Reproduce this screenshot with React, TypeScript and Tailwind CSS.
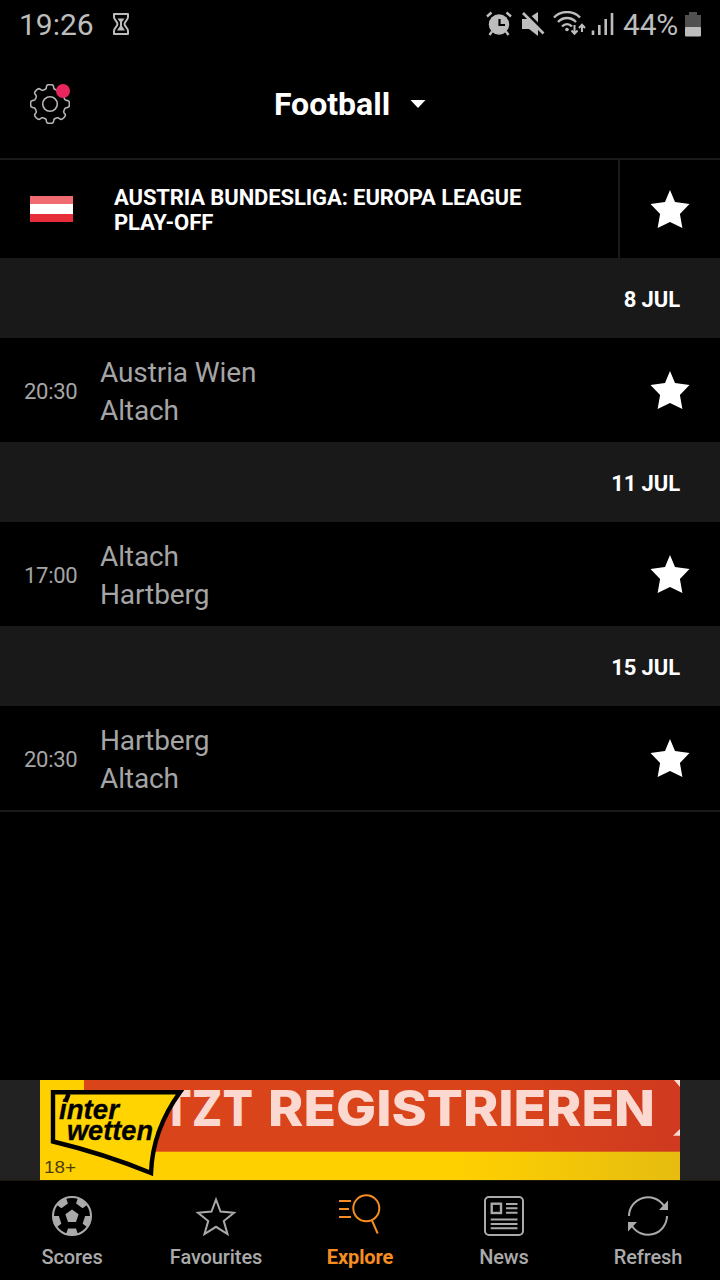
import type { ReactNode } from "react";

const matchDays = [
  { date: "8 JUL", time: "20:30", home: "Austria Wien", away: "Altach" },
  { date: "11 JUL", time: "17:00", home: "Altach", away: "Hartberg" },
  { date: "15 JUL", time: "20:30", home: "Hartberg", away: "Altach" },
];

// outline of an eight tooth gear centred on 20,20
const gearPath = () => {
  const points: string[] = [];
  for (let i = 0; i < 240; i++) {
    const a = (i / 240) * Math.PI * 2;
    const r = 17.4 + 2 * Math.tanh(2.6 * (Math.cos(8 * a) + 0.1));
    points.push(
      `${(20 + r * Math.cos(a)).toFixed(2)} ${(20 + r * Math.sin(a)).toFixed(2)}`
    );
  }
  return `M${points.join("L")}Z`;
};

const StarIcon = () => (
  <svg width="40" height="38" viewBox="0 0 40 38" fill="#fff">
    <path d="M20 0L25 11.900L39.500 14L29.900 24L32.400 38L20 31.900L7.600 38L10.100 24L.5 14L15 11.900Z" />
  </svg>
);

const StatusBar = () => (
  <div className="flex h-12 items-center pl-[19px] text-[30px] text-[#bdbdbd]">
    <span className="w-[76px]">19:26</span>
    <svg className="ml-[17px]" width="18" height="24" viewBox="0 0 18 24" fill="none" stroke="currentColor" strokeWidth="2">
      <path d="M2 2H16V5C16 8 12.500 9.500 12.500 12S16 16 16 19V22H2V19C2 16 5.500 14.500 5.500 12S2 8 2 5Z" strokeLinejoin="round" />
      <path d="M5.500 6.500H12.500L10 10V14L13 18.500H5L8 14V10Z" fill="currentColor" stroke="none" />
    </svg>
    <div className="ml-auto flex items-center pr-[19px]">
      <svg width="26" height="26" viewBox="0 0 26 26" fill="none" stroke="currentColor">
        <circle cx="13" cy="13.500" r="10.200" fill="currentColor" stroke="none" />
        <path d="M13.500 8V14H19" stroke="#000" strokeWidth="2.200" />
        <path d="M1 5.500L5.500 1.500M20.500 1.500L25 5.500M6 20.500L3.500 24M20 20.500L22.500 24" strokeWidth="2.400" />
      </svg>
      <svg className="ml-[10px]" width="23" height="26" viewBox="0 0 23 26">
        <path d="M0 8H5L16 1V25L7 18H0Z" fill="currentColor" />
        <path d="M2.500 0L23 20.500" stroke="#000" strokeWidth="3" />
        <path d="M1 2L21.500 22.500" stroke="currentColor" strokeWidth="2.600" />
      </svg>
      <svg className="ml-2" width="33" height="26" viewBox="0 0 33 26" fill="none" stroke="currentColor" strokeWidth="2.400">
        <path d="M1 6.500C8 -.8 20 -.8 27 6.500M5 11C10 5.600 18 5.600 23 11M9 15.500C12 12.300 16 12.300 19 15.500" />
        <circle cx="14" cy="18.500" r="1.800" fill="currentColor" stroke="none" />
        <path d="M21.500 14V22.500M18.500 19.500L21.500 22.800L24.500 19.500M29 21V15M26 17L29 13.800L32 17" strokeWidth="2" />
      </svg>
      <svg className="ml-[5px]" width="23" height="24" viewBox="0 0 23 24" stroke="currentColor" strokeWidth="2.600">
        <path d="M2 18.500V23M8.300 13V23M14.700 7V23M21 1V23" />
      </svg>
      <span className="ml-[9px] w-[59px] tracking-[-0.2px]">44%</span>
      <svg className="ml-[3px]" width="16" height="25" viewBox="0 0 16 25">
        <path d="M0 3H4V0H12V3H16V15H0Z" fill="#505050" />
        <rect y="15" width="16" height="9.500" rx="1" fill="currentColor" />
      </svg>
    </div>
  </div>
);

const Header = () => (
  <header className="grid h-28 grid-cols-[120px_1fr_140px] items-center border-b-2 border-[#1a1a1a]">
    <div className="relative ml-[30px] mt-0.5 h-10 w-10">
      <svg width="40" height="40" viewBox="0 0 40 40" fill="none" stroke="#b5b5b5" strokeWidth="1.600">
        <path d={gearPath()} />
        <circle cx="20" cy="20" r="7.300" />
      </svg>
      <span className="absolute left-[26px] top-0 h-3.5 w-3.5 rounded-full bg-[#e8255c]" />
    </div>
    <div className="flex items-center justify-center pt-0.5 text-[32px] font-bold text-white">
      Football
      <svg className="ml-5" width="16" height="9" viewBox="0 0 16 9" fill="#fff">
        <path d="M.5 0H15.500L8 8Z" />
      </svg>
    </div>
  </header>
);

const LeagueRow = () => (
  <div className="flex h-[98px] text-white">
    <div className="flex flex-1 items-center pl-[30px]">
      <div className="h-[26px] w-[43px]">
        <div className="h-2 bg-[#f06c70]" />
        <div className="h-[10px] bg-white" />
        <div className="h-2 bg-[#e82d3a]" />
      </div>
      <h2 className="ml-[41px] w-[440px] pt-0.5 text-[22px] font-bold leading-[25px] tracking-[-0.11px]">
        AUSTRIA BUNDESLIGA: EUROPA LEAGUE PLAY-OFF
      </h2>
    </div>
    <div className="flex w-[102px] items-center border-l-2 border-[#1a1a1a] pl-[30px]">
      <StarIcon />
    </div>
  </div>
);

const Banner = () => (
  <div className="flex h-[100px] justify-center bg-[#222]">
    <svg width="640" height="100" viewBox="0 0 640 100">
      <defs>
        <linearGradient id="yellow">
          <stop offset=".65" stopColor="#ffd000" />
          <stop offset="1" stopColor="#e6bc10" />
        </linearGradient>
        <linearGradient id="red">
          <stop offset=".7" stopColor="#da441b" />
          <stop offset="1" stopColor="#cf3a20" />
        </linearGradient>
      </defs>
      <rect width="640" height="100" fill="url(#yellow)" />
      <rect x="44" width="596" height="71.700" fill="url(#red)" />
      <g fill="#fbd9d0" fontFamily="Inter, sans-serif" fontWeight="800" fontSize="49">
        <text x="67" y="45.700" textLength="146" lengthAdjust="spacingAndGlyphs">JETZT</text>
        <text x="228" y="45.700" textLength="387" lengthAdjust="spacingAndGlyphs">REGISTRIEREN</text>
        <path d="M634 0H640V7ZM633 55.700L640 49V55.700Z" />
      </g>
      <path d="M13 12.300H140Q112.500 50 111 93Q65 74 13 61.500Z" fill="#ffd400" stroke="#000" strokeWidth="4.400" />
      <path d="M28.500 14L25.500 22" stroke="#000" strokeWidth="4.500" />
      <g fontFamily="Liberation Sans, sans-serif" fontWeight="700" fontStyle="italic" fontSize="27.500" stroke="#000" strokeWidth=".3">
        <text x="19" y="39.300" textLength="60" lengthAdjust="spacingAndGlyphs">inter</text>
        <text x="27" y="59.500" textLength="86" lengthAdjust="spacingAndGlyphs">wetten</text>
      </g>
      <text x="4" y="92.700" textLength="32" lengthAdjust="spacingAndGlyphs" fontFamily="Liberation Sans, sans-serif" fontSize="16.500" fill="#4a3c0c">18+</text>
    </svg>
  </div>
);

const NavItem = ({ label, active, children }: { label: string; active?: boolean; children: ReactNode }) => (
  <div className={`flex flex-col items-center ${active ? "font-bold text-[#f68d22]" : "font-medium text-[#aaa]"}`}>
    <svg className="overflow-visible" width="40" height="40" viewBox="0 0 40 40" fill="none" stroke="currentColor" strokeWidth="2">
      {children}
    </svg>
    <span className="mt-[9px] text-[20px] leading-6 tracking-[-0.1px]">{label}</span>
  </div>
);

const BottomNav = () => (
  <nav className="grid h-[100px] grid-cols-5 border-t border-[#1c1707] pt-[15px]">
    <NavItem label="Scores">
      <circle cx="20" cy="20" r="19" />
      <g fill="currentColor" stroke="none">
        <path d="M20 13.500L26.600 18.300L24 26H16L13.400 18.300Z" />
        {[0, 72, 144, 216, 288].map((angle) => (
          <path key={angle} d="M16 32.500H24L26 38.500H14Z" transform={`rotate(${angle} 20 20)`} />
        ))}
      </g>
    </NavItem>
    <NavItem label="Favourites">
      <path d="M20 3.500L24.500 15.600L38 16.700L27.800 25L31.500 38L20 30.800L8.500 38L12.200 25L2 16.700L15.500 15.600Z" />
    </NavItem>
    <NavItem label="Explore" active>
      <circle cx="26.300" cy="12.300" r="13" />
      <path d="M32 24.500L37.700 37.500M-1 5H11M-1 13H9M-1 21H11" />
    </NavItem>
    <NavItem label="News">
      <rect x="1" y="1" width="38" height="38" rx="4" />
      <rect x="7.700" y="7.700" width="9.300" height="9.300" strokeWidth="2.400" />
      <path d="M22 8H33.500M22 12.200H33.500M22 16.700H33.500M6.700 23.500H33.500M6.700 28H33.500M6.700 32.300H33.500" />
    </NavItem>
    <NavItem label="Refresh">
      <path d="M1 20A19 19 0 0 1 36 10M39 20A19 19 0 0 1 4 30" />
      <path d="M40 4.500V14H31ZM0 26H9L0 35.500Z" fill="currentColor" stroke="none" />
    </NavItem>
  </nav>
);

export default function App() {
  return (
    <div className="flex h-[1280px] w-[720px] flex-col overflow-hidden bg-black font-['Roboto',sans-serif]">
      <StatusBar />
      <Header />
      <main className="flex-1">
        <LeagueRow />
        {matchDays.map((match) => (
          <section key={match.date}>
            <div className="flex h-20 items-center justify-end bg-[#191919] pr-10 pt-[3px] text-[22px] font-bold tracking-[-0.1px] text-white">
              {match.date}
            </div>
            <div className="flex h-[104px] items-center pr-[30px] text-[#a5a5a5]">
              <span className="w-[100px] pl-6 pt-[3px] text-[22px] tracking-[-0.3px]">{match.time}</span>
              <div className="flex-1 pt-1 text-[28px] leading-[38px] tracking-[-0.1px]">
                <p>{match.home}</p>
                <p>{match.away}</p>
              </div>
              <StarIcon />
            </div>
          </section>
        ))}
        <div className="h-0.5 bg-[#1a1a1a]" />
      </main>
      <Banner />
      <BottomNav />
    </div>
  );
}
